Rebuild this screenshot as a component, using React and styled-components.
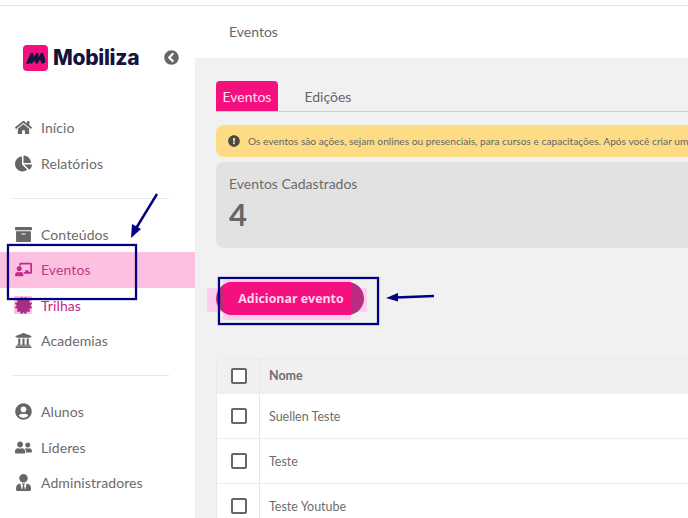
import React from 'react';
import styled, { createGlobalStyle } from 'styled-components';
import { FaHome, FaChartPie, FaArchive, FaChalkboardTeacher, FaCertificate, FaUniversity, FaUserCircle, FaUserFriends, FaUserTie, FaChevronCircleLeft, FaExclamationCircle } from 'react-icons/fa';

const Global = createGlobalStyle`
  html, body { margin: 0; padding: 0; background: #fff; overflow: hidden; }
  * { box-sizing: border-box; }
  body { font-family: Lato, "Open Sans", sans-serif; }
`;
const Page = styled.div`
  position: relative; width: 688px; height: 518px; overflow: hidden;
  background: #fff; padding-top: 5px; display: flex; flex-direction: column; color: #666;
`;
const TopLine = styled.div`height: 1px; background: #e4e4e4; flex: none;`;
const Body = styled.div`display: flex; flex: 1; min-height: 0;`;
const Sidebar = styled.aside`width: 195px; flex: none; background: #fff; display: flex; flex-direction: column;`;
const LogoRow = styled.div`
  height: 104px; flex: none; padding: 39px 16px 0 23px; display: flex; align-items: flex-start; justify-content: space-between;
`;
const Logo = styled.div`display: flex; align-items: center; gap: 5px; height: 26px;`;
const LogoText = styled.span`font-family: Inter, sans-serif; font-weight: 800; font-size: 21px; letter-spacing: -0.3px; color: #15133c; position: relative; top: -0.5px;`;
const Collapse = styled.span`display: flex; color: #666; font-size: 15px; margin-top: 5px;`;
const Group = styled.nav`
  display: flex; flex-direction: column; padding: 0 0 17.5px; margin-bottom: 18px; position: relative;
  &:not(:last-child)::after {
    content: ''; position: absolute; left: 13px; width: 156px; bottom: 0; height: 1px; background: #e6e6e6;
  }
`;
const Item = styled.a`
  display: flex; align-items: center; height: 35.5px; padding-left: 14px; font-size: 14px; letter-spacing: 0.1px;
  color: ${p => (p.$tone === 'active' ? '#c0388c' : p.$tone === 'pink' ? '#c81e86' : '#6b6b6b')};
  background: ${p => (p.$tone === 'active' ? '#fdc0e0' : 'transparent')};
`;
const IconSlot = styled.span`
  width: 18px; height: 18px; margin-right: 9px; display: flex; align-items: center; justify-content: center; font-size: 17px;
  color: ${p => (p.$tone === 'active' ? '#c32a8c' : p.$tone === 'pink' ? '#a82d85' : '#666')};
  background: ${p => (p.$tone === 'pink' ? '#fdc0e6' : 'transparent')};
`;
const Content = styled.main`flex: 1; min-width: 0; display: flex; flex-direction: column;`;
const Header = styled.header`
  height: 52px; flex: none; padding: 0 0 1px 34px; display: flex; align-items: center; font-size: 14px; color: #666; background: #fff;
`;
const Main = styled.div`flex: 1; background: #f1f1f1; padding: 23px 0 0 21px; display: flex; flex-direction: column; width: 493px;`;
const Tabs = styled.div`display: flex; align-items: stretch; height: 31px; border-bottom: 1px solid #cfcfcf; width: 600px; flex: none;`;
const Tab = styled.div`
  padding: 0 ${p => (p.$active ? '6.5px' : '26.5px')}; display: flex; align-items: center; font-size: 14px;
  background: ${p => (p.$active ? '#f5107f' : 'transparent')};
  color: ${p => (p.$active ? '#ffe3f1' : '#666')};
  border-radius: 4px 4px 0 0;
`;
const Alert = styled.div`
  margin-top: 13px; height: 32px; width: 600px; flex: none; background: #fddc85; border-radius: 8px; padding-left: 12px;
  display: flex; align-items: center; gap: 8px; font-size: 10.2px; color: #666; white-space: nowrap; overflow: hidden;
`;
const AlertIcon = styled.span`display: flex; font-size: 12px; color: #4a4a4a;`;
const StatCard = styled.section`
  margin-top: 5px; height: 86px; width: 600px; flex: none; background: #e2e2e2; border-radius: 8px; padding: 14px 13px;
`;
const StatLabel = styled.div`font-size: 14px; color: #6b6b6b; line-height: 16px;`;
const StatValue = styled.div`font-size: 31px; font-weight: 700; color: #666; line-height: 36px; margin-top: 4px;`;
const ButtonWrap = styled.div`
  position: relative; margin-top: 34px; width: 148px; height: 33px; flex: none;
`;
const HighlightWide = styled.span`position: absolute; left: -9px; right: -3px; top: 6px; bottom: 3px; background: #fdcdec;`;
const HighlightTall = styled.span`position: absolute; left: 7px; right: 13px; top: -2px; bottom: -5px; background: #fdcdec;`;
const AddButton = styled.button`
  position: absolute; inset: 0; border: none; border-radius: 17px; background: #b92c7f; overflow: hidden; padding: 0;
  font-family: "Open Sans", Lato, sans-serif; font-weight: 700; font-size: 12.4px; color: #ffd5ec;
  display: flex; align-items: center; justify-content: center;
  &::before { content: ''; position: absolute; left: 7px; right: 13px; top: 0; bottom: 0; background: #f5107f; }
`;
const ButtonLabel = styled.span`position: relative; left: 1px;`;
const Table = styled.div`
  margin-top: 43px; width: 600px; flex: 1; background: #fff; border: 1px solid #e8e8e8; border-bottom: none; border-radius: 8px 8px 0 0; overflow: hidden;
`;
const Row = styled.div`
  display: flex; height: ${p => (p.$head ? '34.5px' : '45px')};
  background: ${p => (p.$head ? '#f0f0f0' : '#fff')};
  border-bottom: 1px solid #eeeeee;
`;
const CheckCell = styled.div`width: 43px; flex: none; padding-left: 2px; display: flex; align-items: center; justify-content: center; border-right: 1px solid #e8e8e8;`;
const Check = styled.span`width: 16px; height: 16px; border: 2px solid #666; border-radius: 2px; background: #fff; display: block;`;
const NameCell = styled.div`
  padding: ${p => (p.$head ? '0' : '1px')} 0 0 9px; display: flex; align-items: center; font-size: 12.5px;
  font-weight: ${p => (p.$head ? 700 : 400)}; color: #6e6e6e;
`;
const Frame = styled.div`
  position: absolute; border: 2px solid #000080; box-shadow: 0 0 1px #000080, inset 0 0 1px #000080; pointer-events: none;
  left: ${p => p.$x}px; top: ${p => p.$y}px; width: ${p => p.$w}px; height: ${p => p.$h}px;
`;
const Arrow = styled.svg`position: absolute; left: 0; top: 0; width: 688px; height: 518px; pointer-events: none;`;

const LogoMark = () => (
  <svg width="25" height="26" viewBox="0 0 25 26">
    <rect width="25" height="26" rx="4" fill="#f5107f" />
    <path d="M3 18.5 L7.5 8.5 Q9.5 7 10.5 9 L10.5 12.5 L13 8.5 Q14.5 7 15.5 9 L15.5 12.5 L17.5 8.5 Q19.5 7 20.5 9 L22.5 16 Q22 19 18.5 18.5 L17 14.5 L15 18 Q13 19.5 12 17.5 L12 15 L9.5 18 Q8 19.5 7 18 Q5 19.5 3 18.5 Z" fill="#15133c" />
  </svg>
);

const groups = [
  [['Início', FaHome], ['Relatórios', FaChartPie]],
  [['Conteúdos', FaArchive], ['Eventos', FaChalkboardTeacher, 'active'], ['Trilhas', FaCertificate, 'pink'], ['Academias', FaUniversity]],
  [['Alunos', FaUserCircle], ['Líderes', FaUserFriends], ['Administradores', FaUserTie]],
];
const rows = ['Suellen Teste', 'Teste', 'Teste Youtube'];

export default function App() {
  return (
    <Page>
      <Global />
      <TopLine />
      <Body>
        <Sidebar>
          <LogoRow>
            <Logo><LogoMark /><LogoText>Mobiliza</LogoText></Logo>
            <Collapse><FaChevronCircleLeft /></Collapse>
          </LogoRow>
          {groups.map((g, i) => (
            <Group key={i}>
              {g.map(([label, Icon, tone]) => (
                <Item key={label} $tone={tone}>
                  <IconSlot $tone={tone}><Icon /></IconSlot>{label}
                </Item>
              ))}
            </Group>
          ))}
        </Sidebar>
        <Content>
          <Header>Eventos</Header>
          <Main>
            <Tabs>
              <Tab $active>Eventos</Tab>
              <Tab>Edições</Tab>
            </Tabs>
            <Alert>
              <AlertIcon><FaExclamationCircle /></AlertIcon>
              Os eventos são ações, sejam onlines ou presenciais, para cursos e capacitações. Após você criar um
            </Alert>
            <StatCard>
              <StatLabel>Eventos Cadastrados</StatLabel>
              <StatValue>4</StatValue>
            </StatCard>
            <ButtonWrap>
              <HighlightWide />
              <HighlightTall />
              <AddButton><ButtonLabel>Adicionar evento</ButtonLabel></AddButton>
            </ButtonWrap>
            <Table>
              <Row $head>
                <CheckCell><Check /></CheckCell>
                <NameCell $head>Nome</NameCell>
              </Row>
              {rows.map(r => (
                <Row key={r}>
                  <CheckCell><Check /></CheckCell>
                  <NameCell>{r}</NameCell>
                </Row>
              ))}
            </Table>
          </Main>
        </Content>
      </Body>
      <Frame $x={7} $y={244} $w={130} $h={56} />
      <Frame $x={218} $y={277} $w={161} $h={48} />
      <Arrow viewBox="0 0 688 518">
        <path d="M157 194 L135 230" stroke="#000080" strokeWidth="2.4" fill="none" />
        <path d="M131 238 L132 224 L141 229 Z" fill="#000080" />
        <path d="M434 296 L396 297.5" stroke="#000080" strokeWidth="2.4" fill="none" />
        <path d="M386 298 L398 293 L398 301.5 Z" fill="#000080" />
      </Arrow>
    </Page>
  );
}
